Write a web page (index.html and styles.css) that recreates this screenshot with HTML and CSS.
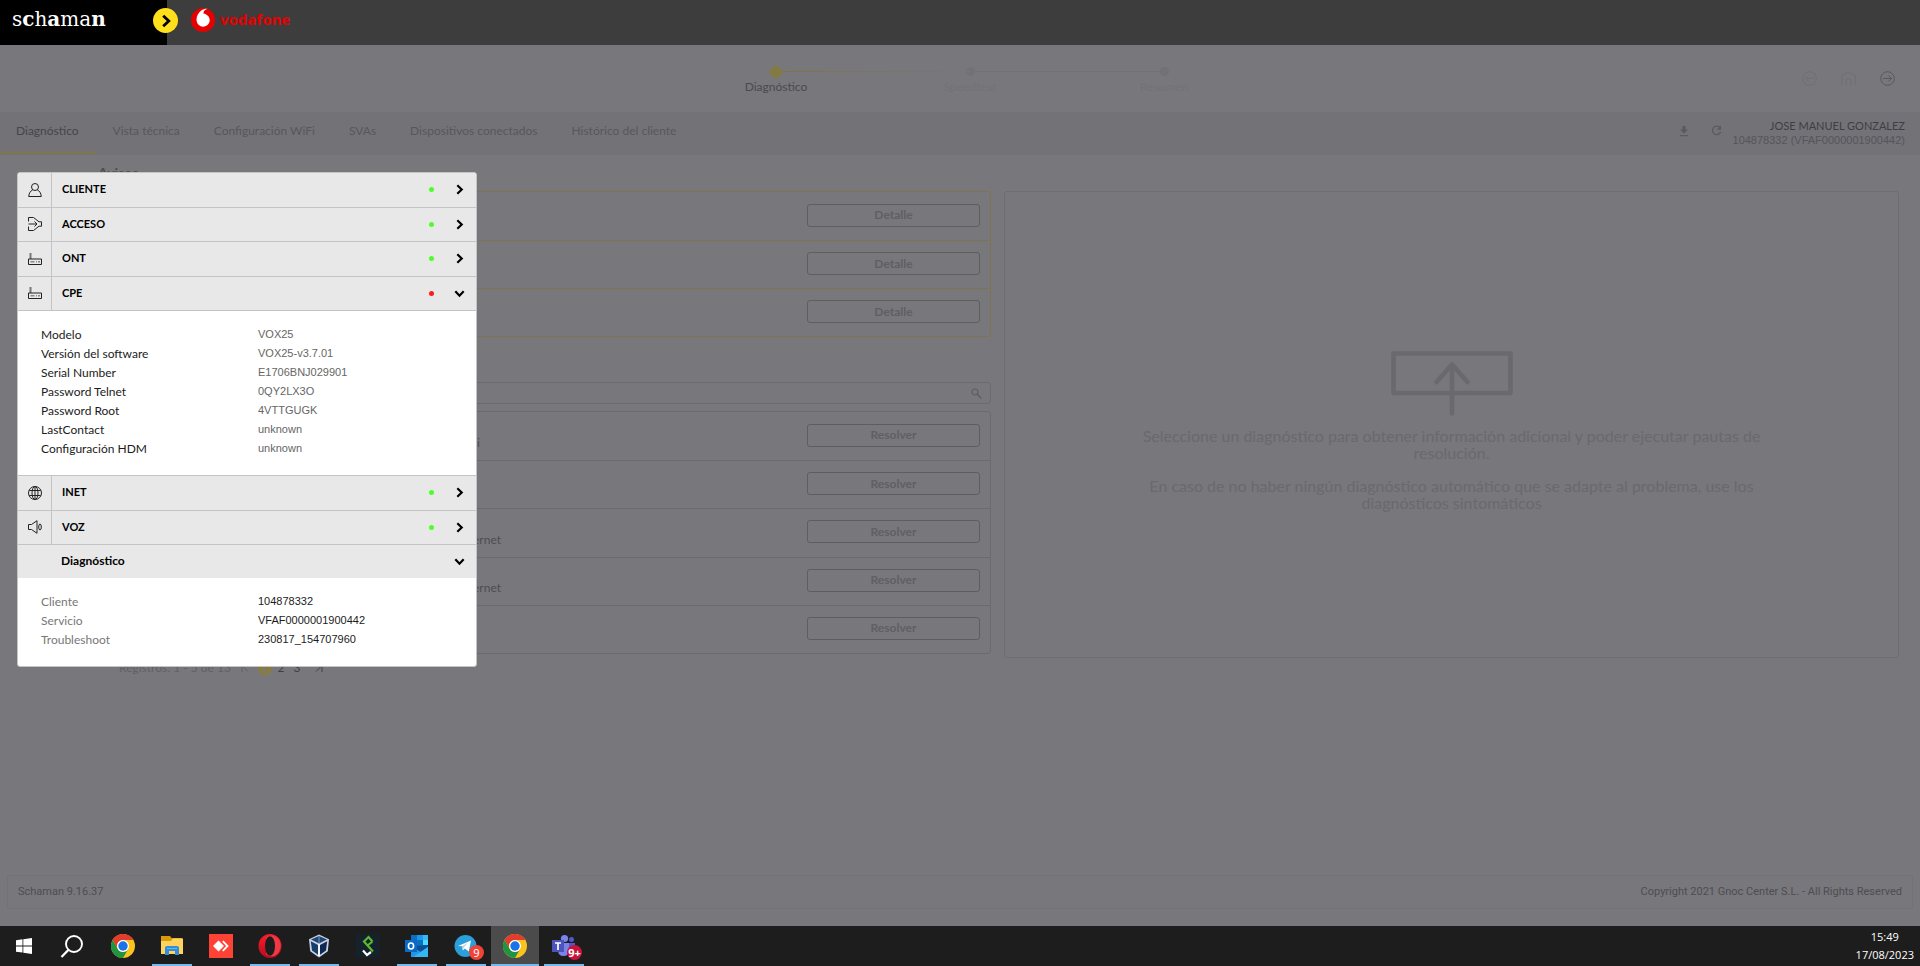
FILE: index.html
```html
<!DOCTYPE html>
<html lang="es">
<head>
<meta charset="utf-8">
<title>Schaman</title>
<link rel="stylesheet" href="styles.css">
</head>
<body>
<svg class="defs" width="0" height="0" aria-hidden="true">
  <symbol id="chev" viewBox="0 0 10 10"><path d="M3 1.200 7 5 3 8.800" fill="none" stroke="currentColor" stroke-width="2"/></symbol>
  <symbol id="router" viewBox="0 0 14 14"><path d="M2.500 1v6" stroke="#777" stroke-width="2"/><path d="M.5 7v5.500h13V7z" fill="none" stroke="currentColor"/><path d="M2.500 9.700h4M8 9.700h1M10 9.700h2" stroke="#888" stroke-width="1.500"/></symbol>
  <symbol id="chrome" viewBox="0 0 24 24"><circle cx="12" cy="12" r="12" fill="#fcc31e"/><path d="M1.600 6A12 12 0 0 1 22.400 6H12a6 6 0 0 0-5.200 9z" fill="#e33b2e"/><path d="M1.600 6A12 12 0 0 0 12 24l5.200-9a6 6 0 0 1-10.400 0z" fill="#229342"/><circle cx="12" cy="12" r="6" fill="#fff"/><circle cx="12" cy="12" r="4.700" fill="#1a73e8"/></symbol>
</svg>

<header class="topbar">
  <div class="brand"><span>s</span><b>c</b><span>h</span><b>a</b><span>ma</span><b>n</b></div>
  <button class="expand" aria-label="Expandir"><svg width="14" height="14"><use href="#chev"/></svg></button>
  <div class="client-brand">
    <svg width="24" height="24" viewBox="0 0 24 24"><circle cx="12" cy="12" r="12" fill="#e60000"/><path d="M12.100 18.700c-3.300 0-6.600-2.700-6.600-7.200 0-3.600 2-7 4.700-9 2-1.400 4.500-2 6.300-1.700-2.400.5-4.100 2.500-4.100 4.600 3.400.8 6.300 2.900 6.300 6.700 0 3.900-2.900 6.600-6.600 6.600z" fill="#fff"/></svg>
    <span>vodafone</span>
  </div>
</header>

<div class="progress">
  <ol class="steps">
    <li class="step current"><i></i><span>Diagnóstico</span></li>
    <li class="step"><i></i><span>Speedtest</span></li>
    <li class="step"><i></i><span>Resumen</span></li>
  </ol>
  <div class="nav-icons">
    <button aria-label="Atrás"><svg width="15" height="15" viewBox="0 0 15 15"><circle cx="7.500" cy="7.500" r="6.800"/><path d="M12 7.500H3.500M6.500 4.500l-3 3 3 3"/></svg></button>
    <button aria-label="Inicio"><svg width="15" height="15" viewBox="0 0 15 15"><path d="M.7 14.500V5L7.500.8 14.300 5v9.500M5 14.500V9q2.500-2 5 0v5.500"/></svg></button>
    <button class="strong" aria-label="Salir"><svg width="15" height="15" viewBox="0 0 15 15"><circle cx="7.500" cy="7.500" r="6.800"/><path d="M3 7.500h8.500M8.500 4.500l3 3-3 3"/></svg></button>
  </div>
</div>

<nav class="tabs">
  <a class="active" href="#">Diagnóstico</a><a href="#">Vista técnica</a><a href="#">Configuración WiFi</a><a href="#">SVAs</a><a href="#">Dispositivos conectados</a><a href="#">Histórico del cliente</a>
  <div class="tools">
    <button aria-label="Descargar"><svg width="10" height="12" viewBox="0 0 10 12"><path d="M3.500 1h3v3.500H9L5 8.500 1 4.500h2.500zM1 10h8v1.300H1z" fill="currentColor"/></svg></button>
    <button aria-label="Recargar"><svg width="11" height="11" viewBox="0 0 11 11"><path d="M9 2.800A4.200 4.200 0 1 0 9.600 7" fill="none" stroke="currentColor" stroke-width="1.300"/><path d="M10 .5v4.300H5.800z" fill="currentColor"/></svg></button>
  </div>
  <div class="user"><strong>JOSE MANUEL GONZALEZ</strong><span>104878332 (VFAF0000001900442)</span></div>
</nav>

<main class="content">
  <section class="left">
    <h2>Avisos</h2>
    <div class="list alerts">
      <div class="row"><button>Detalle</button></div>
      <div class="row"><button>Detalle</button></div>
      <div class="row"><button>Detalle</button></div>
    </div>
    <div class="search"><input type="text" aria-label="Buscar"><svg width="11" height="11" viewBox="0 0 11 11"><circle cx="4" cy="4" r="3" fill="none" stroke="currentColor" stroke-width="1.200"/><path d="m6.200 6.200 4 4" stroke="currentColor" stroke-width="1.600"/></svg></div>
    <div class="list results">
      <div class="row"><span class="desc short">WiFi</span><button>Resolver</button></div>
      <div class="row"><button>Resolver</button></div>
      <div class="row"><span class="desc">Internet</span><button>Resolver</button></div>
      <div class="row"><span class="desc">Internet</span><button>Resolver</button></div>
      <div class="row"><button>Resolver</button></div>
    </div>
    <div class="pager">
      <span class="count">Registros: 1 - 5 de 13</span>
      <button class="faded" aria-label="Primera"><svg width="8" height="9" viewBox="0 0 8 9"><path d="M1 0v9M7 .5l-4 4 4 4"/></svg></button>
      <button class="on">1</button><button>2</button><button>3</button>
      <button class="last" aria-label="Última"><svg width="8" height="9" viewBox="0 0 8 9"><path d="M7 0v9M1 .5l4 4-4 4"/></svg></button>
    </div>
  </section>
  <section class="empty">
    <svg width="122" height="65" viewBox="0 0 122 65"><path d="M2.500 2.500h117v39.500H2.500zM61 62.500V13.500M45.500 31 61 13.500 76.500 31" fill="none" stroke="currentColor" stroke-width="4.600" stroke-linecap="round" stroke-linejoin="round"/></svg>
    <p>Seleccione un diagnóstico para obtener información adicional y poder ejecutar pautas de resolución.</p>
    <p>En caso de no haber ningún diagnóstico automático que se adapte al problema, use los diagnósticos sintomáticos</p>
  </section>
</main>

<footer class="footer"><span>Schaman 9.16.37</span><span>Copyright 2021 Gnoc Center S.L. - All Rights Reserved</span></footer>

<aside class="popup">
  <div class="group four">
    <button class="head"><span class="ico"><svg width="14" height="14" viewBox="0 0 14 14"><circle cx="7" cy="4" r="3.500"/><path d="M4.800 6.700C2.500 8 1 10 .7 13.500h12.600C13 10 11.500 8 9.200 6.700"/></svg></span><span class="name">CLIENTE</span><i class="dot"></i><svg class="chev" width="11" height="11"><use href="#chev"/></svg></button>
    <button class="head"><span class="ico"><svg width="14" height="14" viewBox="0 0 14 14"><path d="M.5 4.500v-4h5L11 4.800h2.500v4.400H11l-5.500 4.300h-5v-4M.5 7H9M6.500 4.500 9 7 6.500 9.500"/></svg></span><span class="name">ACCESO</span><i class="dot"></i><svg class="chev" width="11" height="11"><use href="#chev"/></svg></button>
    <button class="head"><span class="ico"><svg width="14" height="14"><use href="#router"/></svg></span><span class="name">ONT</span><i class="dot"></i><svg class="chev" width="11" height="11"><use href="#chev"/></svg></button>
    <button class="head"><span class="ico"><svg width="14" height="14"><use href="#router"/></svg></span><span class="name">CPE</span><i class="dot bad"></i><svg class="chev open" width="11" height="11"><use href="#chev"/></svg></button>
  </div>
  <dl class="body device">
    <dt>Modelo</dt><dd>VOX25</dd>
    <dt>Versión del software</dt><dd>VOX25-v3.7.01</dd>
    <dt>Serial Number</dt><dd>E1706BNJ029901</dd>
    <dt>Password Telnet</dt><dd>0QY2LX3O</dd>
    <dt>Password Root</dt><dd>4VTTGUGK</dd>
    <dt>LastContact</dt><dd>unknown</dd>
    <dt>Configuración HDM</dt><dd>unknown</dd>
  </dl>
  <div class="group two">
    <button class="head"><span class="ico"><svg width="14" height="14" viewBox="0 0 14 14"><circle cx="7" cy="7" r="6.500"/><ellipse cx="7" cy="7" rx="3" ry="6.500"/><path d="M7 .5v13M1.300 4.500h11.400M1.300 9.500h11.400"/></svg></span><span class="name">INET</span><i class="dot"></i><svg class="chev" width="11" height="11"><use href="#chev"/></svg></button>
    <button class="head"><span class="ico"><svg width="14" height="14" viewBox="0 0 14 14"><path d="M.5 4.500h3L9 .7v12.600L3.500 9.500h-3z"/><ellipse cx="12" cy="7" rx="1.300" ry="3"/></svg></span><span class="name">VOZ</span><i class="dot"></i><svg class="chev" width="11" height="11"><use href="#chev"/></svg></button>
  </div>
  <button class="head plain"><span class="name">Diagnóstico</span><svg class="chev open" width="11" height="11"><use href="#chev"/></svg></button>
  <dl class="body session">
    <dt>Cliente</dt><dd>104878332</dd>
    <dt>Servicio</dt><dd>VFAF0000001900442</dd>
    <dt>Troubleshoot</dt><dd>230817_154707960</dd>
  </dl>
</aside>

<div class="taskbar">
  <div class="system">
    <button aria-label="Inicio de Windows"><svg width="16" height="16" viewBox="0 0 16 16"><path d="M0 2.200 6.500 1.300v6.200H0zM7.300 1.200 16 0v7.500H7.300zM0 8.400h6.500v6.200L0 13.700zM7.300 8.400H16V16l-8.700-1.200z" fill="#fff"/></svg></button>
    <button aria-label="Buscar"><svg width="24" height="24" viewBox="0 0 24 24"><circle cx="14" cy="10" r="8" fill="none" stroke="#fff" stroke-width="1.900"/><path d="M8.300 16 1.500 23" stroke="#fff" stroke-width="2.300"/></svg></button>
  </div>
  <div class="apps">
    <button aria-label="Chrome"><svg width="24" height="24"><use href="#chrome"/></svg></button>
    <button class="run" aria-label="Explorador"><svg width="24" height="24" viewBox="0 0 24 24"><path d="M1 2h9l1.500 2H22v4H1z" fill="#d99a0b"/><path d="M1 7h10l2-2.500h10V20H1z" fill="#ffd35c"/><path d="M5 21v-7q0-2 2-2h10q2 0 2 2v7h-4v-4H9v4z" fill="#2f8fd8"/><path d="M7 14.500h10" stroke="#64b5ef"/></svg></button>
    <button aria-label="AnyDesk"><svg width="24" height="24" viewBox="0 0 24 24"><path d="M0 0h24v24H0z" fill="#ff4236"/><path d="m4 12 5.500-5.500L15 12l-5.500 5.500z" fill="#fff"/><path d="M13.800 7.200 18.500 12l-4.700 4.800" fill="none" stroke="#fff" stroke-width="1.800"/></svg></button>
    <button class="run" aria-label="Opera"><svg width="24" height="24" viewBox="0 0 24 24"><defs><linearGradient id="op" x2="0" y2="1"><stop stop-color="#ff1b2d"/><stop offset="1" stop-color="#b50d1d"/></linearGradient></defs><ellipse cx="12" cy="12" rx="11.500" ry="12" fill="url(#op)"/><path d="M8 3.500C12 0 18 1 21 6c3.500 6 1 12-3 15-3 2-7 1.500-10-.5z" fill="#ee3a44"/><ellipse cx="12" cy="12" rx="5" ry="9.800" fill="#1d1d1d"/></svg></button>
    <button class="run" aria-label="VirtualBox"><svg width="24" height="24" viewBox="0 0 24 24"><path d="m12 .5 10 4.800-1.200 12L12 23.500l-8.800-6.200L2 5.300z" fill="#c8d4e5"/><path d="m12 2 8 3.600-8 4-8-4z" fill="#20466f"/><path d="m3.800 7.300 7.200 3.800v9.700l-6-4.300z" fill="#173e6a"/><path d="m20.200 7.300-7.200 3.800v9.700l6-4.300z" fill="#0d2852"/><path d="M12 10v12" stroke="#fff" stroke-width="1.500"/><path d="M12 2v7" stroke="#6f9bc5"/></svg></button>
    <button aria-label="Schaman"><svg width="24" height="24" viewBox="0 0 24 24"><path d="M0 0h24v24H0z" fill="#16222b"/><path d="M16.500 7.500 12.500 3 8 7.500l9 10M16.500 7.500l-5 4" fill="none" stroke="#5cb82f" stroke-width="2.200"/><path d="m7 16.500 4 4.500 4-3" fill="none" stroke="#fff" stroke-width="2.200"/></svg></button>
    <button class="run" aria-label="Outlook"><svg width="24" height="24" viewBox="0 0 24 24"><path d="M6 1h17v13H6z" fill="#0d6fc4"/><path d="M12 1h6v5h-6z" fill="#1c96e8"/><path d="M18 1h5v5h-5z" fill="#3ab6f7"/><path d="M18 6h5v5h-5z" fill="#50d9ff"/><path d="M6 12h17v11H6z" fill="#2496e3"/><path d="m6 12 10 6 7-5v-2z" fill="#0a4f98"/><path d="m23 13-15 10h15z" fill="#35b8f1"/><path d="M0 6h12v12H0z" fill="#0a6bc6"/><ellipse cx="6" cy="12" rx="2.600" ry="3" fill="none" stroke="#fff" stroke-width="1.600"/></svg></button>
    <button class="run" aria-label="Telegram"><svg width="24" height="24" viewBox="0 0 24 24"><circle cx="11.500" cy="12" r="11" fill="#2a9fd9"/><path d="m4 12 13-5.500-2.200 11-4-3-2 2-.6-4.200z" fill="#fff"/><path d="m8.200 12.300 6-3.500-4.500 4.500-1 3z" fill="#a9cfe5"/></svg><span class="badge">9</span></button>
    <button class="run focus" aria-label="Chrome, ventana activa"><svg width="24" height="24"><use href="#chrome"/></svg></button>
    <button class="run" aria-label="Teams"><svg width="24" height="24" viewBox="0 0 24 24"><circle cx="12.500" cy="4.500" r="3.600" fill="#7b83eb"/><circle cx="19.500" cy="5.500" r="2.500" fill="#5059c9"/><path d="M15 9h8v6q0 5-5 5z" fill="#5059c9"/><path d="M6 9h11v7q0 6-5.500 6T6 16z" fill="#7b83eb"/><path d="M0 6h12v12H0z" fill="#4b53bc"/><path d="M3 9h6M6 9v7" stroke="#fff" stroke-width="1.700"/></svg><span class="badge wide">9+</span></button>
  </div>
  <div class="clock"><span>15:49</span><span>17/08/2023</span></div>
</div>
</body>
</html>
```
FILE: styles.css
```css
* { box-sizing: border-box; }
body {
  margin: 0;
  min-height: 100vh;
  display: flex;
  flex-direction: column;
  position: relative;
  background: #78777b;
  color: #4e4d51;
  font: 12px/16px Lato, "Liberation Sans", sans-serif;
}
button {
  font: inherit;
  color: inherit;
  background: none;
  border: 0;
  padding: 0;
}
.defs { position: absolute; }

.topbar {
  display: flex;
  height: 45px;
  background: #3d3d3d;
}
.brand {
  width: 167px;
  padding: 7px 0 0 12px;
  background: #000;
  color: #fff;
  font: 20px/24px "DejaVu Serif", serif;
}
.expand {
  width: 25px;
  height: 25px;
  margin: 8px 0 0 -14px;
  border-radius: 50%;
  background: #ffe01b;
  color: #000;
  display: grid;
  place-items: center;
}
.client-brand {
  display: flex;
  align-items: center;
  gap: 5px;
  height: 40px;
  margin-left: 13px;
  color: #e60000;
  font: bold 15px/20px "Open Sans", sans-serif;
}
.client-brand span { padding-bottom: 2px; }

.progress {
  display: flex;
  position: relative;
  justify-content: center;
  height: 67px;
}
.steps {
  display: flex;
  margin: 0;
  padding: 21px 0 0 20px;
  list-style: none;
}
.step {
  width: 194px;
  display: flex;
  flex-direction: column;
  align-items: center;
  position: relative;
  color: #737276;
}
.step i {
  width: 9px;
  height: 9px;
  margin: 1px 0 3px;
  border-radius: 50%;
  background: #727175;
}
.step + .step::before {
  content: "";
  position: absolute;
  top: 5px;
  right: 50%;
  width: 188px;
  height: 1px;
  background: #727175;
}
.step:nth-child(2)::before { background: linear-gradient(90deg, #7f7545, #77767a 90%); }
.step.current { color: #4b4a4e; }
.current i { width: 12px; height: 12px; margin: 0 0 1px; background: #837a44; }
.nav-icons {
  position: absolute;
  right: 25px;
  top: 26px;
  display: flex;
  gap: 24px;
  color: #706f73;
}
.nav-icons button { height: 15px; }
.nav-icons svg { display: block; fill: none; stroke: currentColor; }
.nav-icons .strong { color: #59585c; }

.tabs {
  display: flex;
  align-items: stretch;
  height: 43px;
  background: #737277;
}
.tabs a {
  padding: 11px 17px 0;
  border-bottom: 2px solid transparent;
  color: #58575b;
  text-decoration: none;
}
.tabs .active {
  height: 42px;
  padding-left: 16px;
  border-color: #7f7747;
  color: #464549;
}
.tools {
  display: flex;
  align-items: center;
  gap: 22px;
  margin-left: auto;
  padding-bottom: 2px;
  color: #5a595d;
}
.tools svg { display: block; }
.tools button { padding-bottom: 4px; }
.user {
  display: flex;
  flex-direction: column;
  align-items: flex-end;
  width: 198px;
  padding: 7px 15px 0 0;
  white-space: nowrap;
  font: 11px/14px "Liberation Sans", sans-serif;
  color: #56555a;
}
.user strong { font: 11px/14px Lato, sans-serif; color: #3f3e42; }

.content {
  flex: 1;
  display: grid;
  grid-template-columns: 1fr 1fr;
  align-items: start;
  gap: 13px;
  padding: 0 21px 0 96px;
}
h2 { margin: 0 2px; font-size: 14px; line-height: 36px; }
.list {
  display: grid;
  grid-auto-rows: 1fr;
  border: 1px solid #6b6a6f;
  border-radius: 3px;
}
.row {
  display: flex;
  align-items: center;
  padding: 0 10px 2px 0;
}
.row + .row { border-top: 1px solid #6b6a6f; }
.row button {
  width: 173px;
  height: 23px;
  margin-left: auto;
  border: 1px solid #5e5d62;
  border-radius: 3px;
  font-weight: bold;
  color: #605f63;
}
.alerts { min-height: 146px; border-color: #7c7452; }
.alerts .row + .row { border-color: #7c7452; }
.results { min-height: 243px; }
.desc { width: 404px; padding-top: 16px; text-align: right; }
.short { width: 383px; }
.search {
  display: flex;
  align-items: center;
  height: 22px;
  margin: 45px 0 7px;
  padding-right: 8px;
  border: 1px solid #6b6a6f;
  border-radius: 3px;
  color: #5e5d61;
}
.search input { flex: 1; border: 0; background: none; outline: 0; }
.pager {
  display: flex;
  align-items: center;
  gap: 2px;
  height: 28px;
  padding-left: 23px;
  color: #404043;
}
.pager button { width: 14px; height: 14px; line-height: 14px; }
.pager svg { fill: none; stroke: currentColor; }
.pager .count { width: 117px; color: #626165; }
.pager .faded { color: #626165; margin-right: 4px; }
.pager .on { border-radius: 50%; background: #877d43; color: #77767a; }
.pager .last { margin-left: 6px; }

.empty {
  display: flex;
  flex-direction: column;
  align-items: center;
  min-height: 467px;
  margin-top: 36px;
  padding-top: 159px;
  border: 1px solid #6e6d71;
  border-radius: 3px;
  color: #6a696d;
  font-size: 16px;
  line-height: 17px;
  text-align: center;
}
.empty p { max-width: 620px; margin: 0 0 16px; }
.empty svg { margin-bottom: 11px; }

.footer {
  display: flex;
  justify-content: space-between;
  margin: 0 7px 17px;
  padding: 8px 10px;
  border: 1px solid #737276;
  border-radius: 3px;
  font: 11px/16px Roboto, sans-serif;
}

.popup {
  position: absolute;
  left: 17px;
  top: 172px;
  width: 460px;
  background: #fff;
  border: 1px solid #c4c4c4;
  border-radius: 3px;
  color: #000;
  overflow: hidden;
}
.group { display: grid; grid-auto-rows: 1fr; }
.four { min-height: 138px; }
.two { min-height: 70px; border-top: 1px solid #c4c4c4; }
.head {
  display: flex;
  align-items: center;
  width: 100%;
  padding-right: 11px;
  border-bottom: 1px solid #c4c4c4;
  background: #e8e8e8;
  font-size: 11px;
  font-weight: bold;
  text-align: left;
}
.ico {
  display: grid;
  place-items: center;
  align-self: stretch;
  width: 34px;
  border-right: 1px solid #c4c4c4;
  color: #222;
}
.ico svg { fill: none; stroke: currentColor; }
.name { flex: 1; padding: 0 0 1px 10px; }
.dot {
  width: 5px;
  height: 5px;
  margin-right: 20px;
  border-radius: 50%;
  background: #4cff2b;
}
.bad { background: #ff1b1b; }
.open { transform: rotate(90deg); }
.plain { height: 33px; border: 0; padding-left: 33px; font-size: 12px; }
.body {
  display: grid;
  grid-template-columns: 217px 1fr;
  align-content: start;
  grid-auto-rows: 19px;
  line-height: 19px;
  margin: 0;
  padding: 14px 23px 0;
}
.body dd { margin: 0; font: 11px/19px "Liberation Sans", sans-serif; }
.device { min-height: 164px; color: #1c1c1c; }
.device dd { color: #666; }
.session { min-height: 88px; color: #1c1c1c; }
.session dt { color: #777; }

.taskbar {
  display: flex;
  height: 40px;
  background: #1d1d1d;
  color: #fff;
}
.system { display: flex; margin-right: 3px; }
.apps { display: flex; gap: 1px; }
.taskbar button {
  position: relative;
  width: 48px;
  display: grid;
  place-items: center;
}
.run::after {
  content: "";
  position: absolute;
  left: 4px;
  right: 4px;
  bottom: 0;
  height: 2px;
  background: #76b9ed;
}
.focus::after { left: 0; right: 0; }
.taskbar .focus { background: #4b4b4b; }
.badge {
  position: absolute;
  right: 6px;
  bottom: 6px;
  min-width: 15px;
  height: 15px;
  border-radius: 8px;
  background: #f04438;
  font: 11px/15px "Noto Sans", sans-serif;
  text-align: center;
}
.wide { background: #c8143c; font-weight: bold; }
.clock {
  display: flex;
  flex-direction: column;
  align-items: center;
  margin-left: auto;
  padding: 2px 6px 0;
  font: 11px/18px "Open Sans", sans-serif;
}
```
